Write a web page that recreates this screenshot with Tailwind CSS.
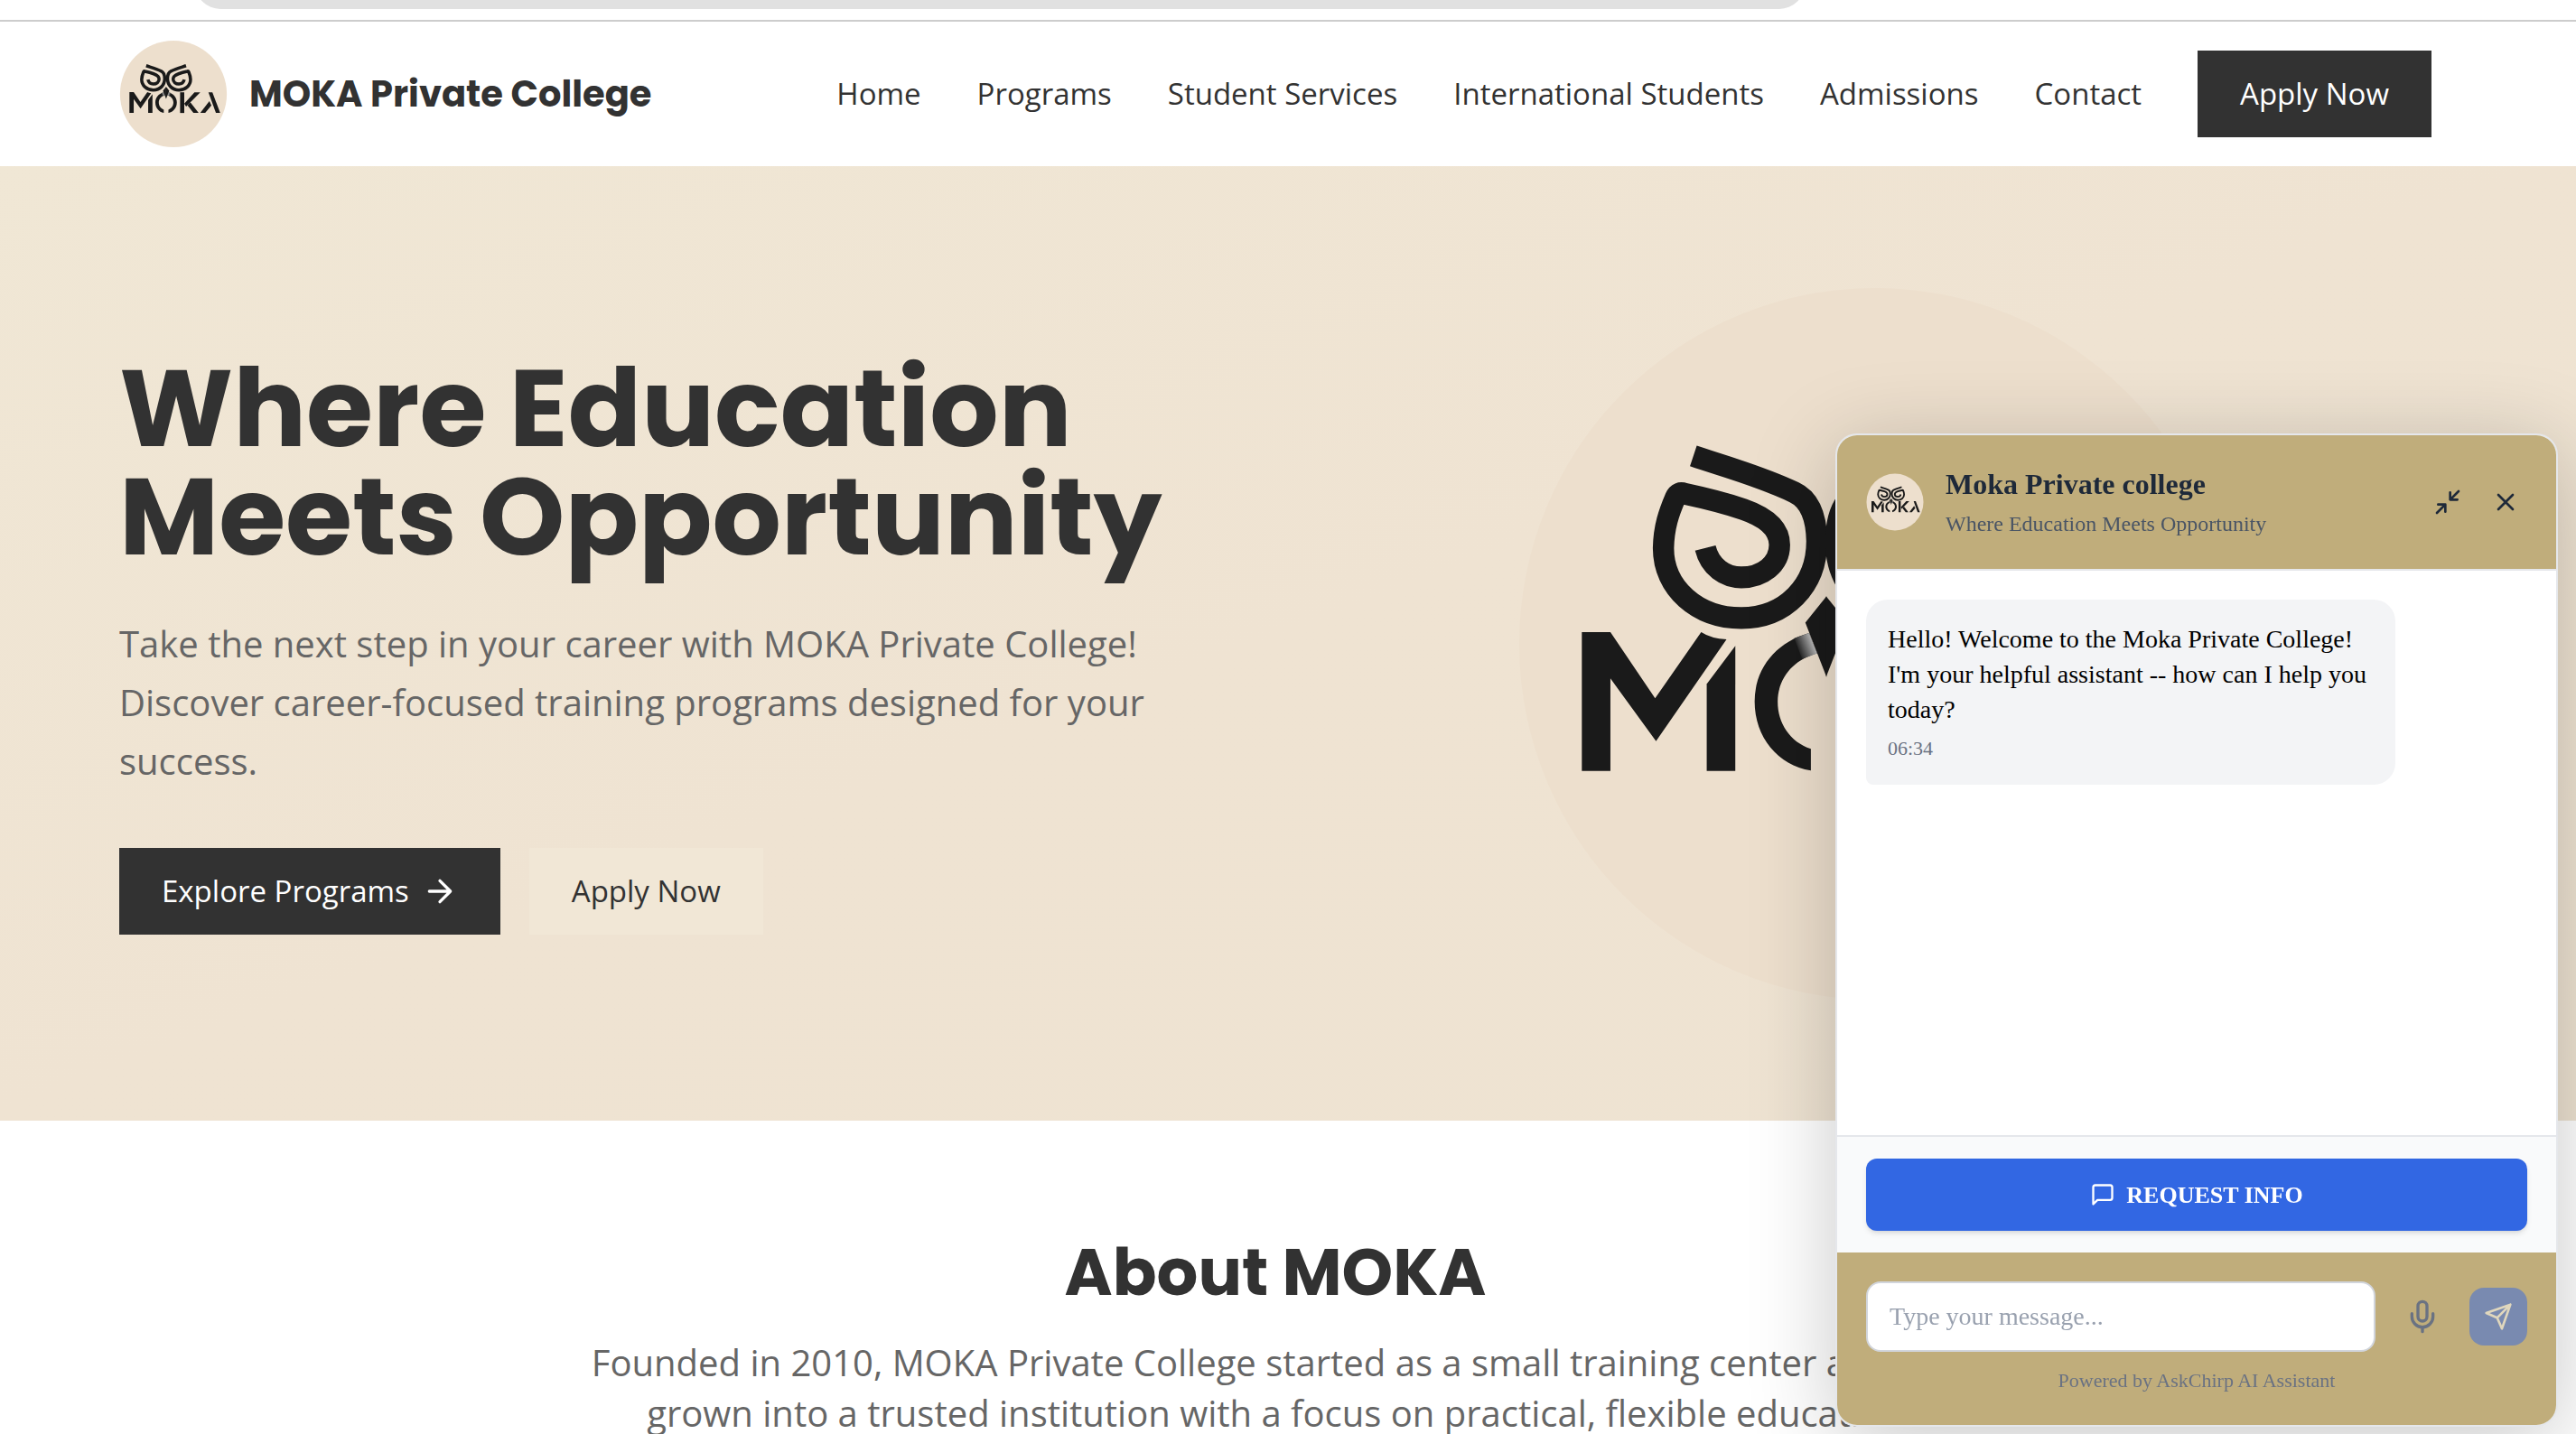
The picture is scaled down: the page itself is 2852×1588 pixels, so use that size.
<!DOCTYPE html>
<html lang="en">
<head>
<meta charset="utf-8">
<title>MOKA Private College</title>
<script src="https://cdn.jsdelivr.net/npm/@tailwindcss/browser@4"></script>
</head>
<body class="h-screen overflow-hidden bg-white font-['Open_Sans',sans-serif] text-[#323232]">

<svg class="absolute size-0" aria-hidden="true">
  <defs>
    <linearGradient id="shine" gradientUnits="userSpaceOnUse" x1="645" y1="798" x2="685" y2="782">
      <stop offset="0" stop-color="#1a1a1a"/><stop offset="1" stop-color="#d0d0d0"/>
    </linearGradient>
    <g id="half" fill="#1a1a1a">
      <path fill="none" stroke="#1a1a1a" stroke-width="46" d="M421 390C480 410 560 430 640 467C675 483 688 520 689 570C689 665 620 733 525 733C430 733 356 670 356 585C357 540 368 510 382 478Q388 465 402 470C450 480 490 490 530 503C580 520 608 545 608 578C608 620 570 647 525 647C490 647 457 625 447 585"/>
      <path d="M672 765C600 785 554 840 554 910C554 985 605 1045 676 1056V1010C630 995 604 955 604 910C604 860 640 820 690 808Z"/>
      <path fill="url(#shine)" d="M640 776L672 765L690 808L657 820Z"/>
      <path d="M710 687L664 743L710 858Z"/>
    </g>
    <symbol id="moka" viewBox="0 0 800 800">
      <circle cx="400" cy="400" r="394" fill="#eddfcd"/>
      <g transform="translate(-16 -12) scale(.5102 .523)">
        <use href="#half"/>
        <use href="#half" transform="translate(1419 0) scale(-1 1)"/>
        <g fill="#1a1a1a">
          <path d="M179 763H241L338 903L438 763Q460 777 493 778L340 994L241 861V1057H179Z"/>
          <path d="M450 873L512 792V1057H450Z"/>
          <path d="M912 765H972V1057H912Z"/>
          <path d="M1120 765H1204L1000 965L972 925Z"/>
          <path d="M1060 905L1180 1057H1105L1020 950Z"/>
          <path d="M1322 765H1379L1492 1057H1430Z"/>
          <path d="M1335 890L1365 950L1275 1057H1204Z"/>
        </g>
      </g>
    </symbol>
  </defs>
</svg>

<!-- Browser toolbar edge -->
<div class="h-6 border-b-2 border-[#cdcdcd] pl-[216px]">
  <div class="flex h-2.5 items-end overflow-hidden">
    <div class="h-14 w-[1782px] max-w-full rounded-full bg-[#e1e1e1]"></div>
  </div>
</div>

<header class="h-40 bg-white pr-7">
  <div class="mx-auto flex h-full max-w-[2560px] items-center justify-between">
    <a href="#" class="flex items-center gap-6">
      <svg class="size-[120px]" role="img" aria-label="MOKA logo"><use href="#moka"/></svg>
      <span class="font-['Poppins','Inter',sans-serif] text-[40px] font-bold">MOKA Private College</span>
    </a>
    <nav class="flex items-center gap-[62px] text-[33px] font-medium">
      <a href="#">Home</a>
      <a href="#">Programs</a>
      <a href="#">Student Services</a>
      <a href="#">International Students</a>
      <a href="#">Admissions</a>
      <a href="#">Contact</a>
      <button class="h-24 bg-[#323232] px-[47px] text-white">Apply Now</button>
    </nav>
  </div>
</header>

<main>
  <section class="bg-linear-to-br from-[#f0e7d5] via-[#efe3d2] to-[#eee3d2] pt-[129px] pr-7 pb-32">
    <div class="mx-auto grid max-w-[2560px] grid-cols-2 items-center gap-24">
      <div>
        <h1 class="mb-12 font-['Poppins','Inter',sans-serif] text-[120px] leading-[120px] font-bold">Where Education<br>Meets Opportunity</h1>
        <p class="mb-16 text-[40px] leading-[65px] text-[#666]">Take the next step in your career with MOKA Private College! Discover career-focused training programs designed for your success.</p>
        <div class="flex gap-8 text-[33px] font-medium">
          <button class="flex h-24 items-center gap-3.5 bg-[#323232] px-[47px] text-white">Explore Programs
            <svg class="size-10" viewBox="0 0 24 24" fill="none" stroke="currentColor" stroke-width="2" stroke-linecap="round" stroke-linejoin="round"><path d="M5 12h14M12 5l7 7-7 7"/></svg>
          </button>
          <button class="h-24 bg-[#f1e7d6] px-[47px]">Apply Now</button>
        </div>
      </div>
      <svg class="mx-auto size-[800px]" role="img" aria-label="MOKA owl logo"><use href="#moka"/></svg>
    </div>
  </section>

  <section class="pt-32 pr-7 text-center">
    <h2 class="mb-8 font-['Poppins','Inter',sans-serif] text-[72px] leading-20 font-bold">About MOKA</h2>
    <p class="mx-auto max-w-[1536px] text-[40px] leading-14 text-[#666]">Founded in 2010, MOKA Private College started as a small training center and has grown into a trusted institution with a focus on practical, flexible education</p>
  </section>
</main>

<!-- Chat widget -->
<aside class="fixed right-5 bottom-2 flex h-[1100px] w-[800px] flex-col overflow-hidden rounded-3xl border-2 border-gray-200 bg-white font-['Liberation_Serif',serif] shadow-[0_16px_96px_rgba(0,0,0,0.22)]">
  <div class="flex h-[150px] shrink-0 items-center gap-6 border-b-2 border-gray-200 bg-[#c0ad7b] px-8">
    <svg class="size-16" role="img" aria-label="MOKA logo"><use href="#moka"/></svg>
    <div class="flex-1 pt-1">
      <h3 class="text-[32px] leading-10 font-bold text-gray-800">Moka Private college</h3>
      <p class="pt-1 text-[24px] leading-10 text-gray-600">Where Education Meets Opportunity</p>
    </div>
    <button class="grid size-16 place-items-center text-gray-800" aria-label="Minimize">
      <svg class="size-8" viewBox="0 0 24 24" fill="none" stroke="currentColor" stroke-width="2" stroke-linecap="round" stroke-linejoin="round"><path d="M4 14h6v6M20 10h-6V4M14 10l7-7M3 21l7-7"/></svg>
    </button>
    <button class="-mr-2 -ml-6 grid size-16 place-items-center text-gray-800" aria-label="Close">
      <svg class="size-8" viewBox="0 0 24 24" fill="none" stroke="currentColor" stroke-width="2" stroke-linecap="round" stroke-linejoin="round"><path d="M18 6 6 18M6 6l12 12"/></svg>
    </button>
  </div>
  <div class="flex-1 px-8 pt-8">
    <div class="w-[586px] rounded-3xl rounded-bl-lg bg-gray-100 p-6 text-black">
      <p class="text-[28px] leading-[39px]">Hello! Welcome to the Moka Private College! I'm your helpful assistant -- how can I help you today?</p>
      <time class="mt-2 block text-[22px] leading-8 text-gray-500">06:34</time>
    </div>
  </div>
  <div class="border-t-2 border-gray-200 bg-gray-50 px-8 py-6">
    <button class="flex h-20 w-full items-center justify-center gap-3 rounded-xl bg-[#3267e3] text-[26px] font-bold text-white shadow-md">
      <svg class="size-7" viewBox="0 0 24 24" fill="none" stroke="currentColor" stroke-width="2" stroke-linecap="round" stroke-linejoin="round"><path d="M21 15a2 2 0 0 1-2 2H7l-4 4V5a2 2 0 0 1 2-2h14a2 2 0 0 1 2 2z"/></svg>
      REQUEST INFO
    </button>
  </div>
  <div class="bg-[#c0ad7b] px-8 pt-8 pb-[33px]">
    <form class="flex items-center gap-5">
      <input type="text" aria-label="Message" placeholder="Type your message..." class="h-[78px] min-w-0 flex-1 rounded-2xl border-2 border-gray-300 bg-white px-6 text-[28px] placeholder:text-gray-400">
      <button type="button" class="grid size-16 place-items-center text-gray-500" aria-label="Voice input">
        <svg class="size-10" viewBox="0 0 24 24" fill="none" stroke="currentColor" stroke-width="2" stroke-linecap="round" stroke-linejoin="round"><path d="M12 2a3 3 0 0 0-3 3v7a3 3 0 0 0 6 0V5a3 3 0 0 0-3-3ZM19 10v2a7 7 0 0 1-14 0v-2M12 19v3"/></svg>
      </button>
      <button type="button" class="grid size-16 place-items-center rounded-2xl bg-[#798ab0] text-[#e0d7bd]" aria-label="Send">
        <svg class="size-8" viewBox="0 0 24 24" fill="none" stroke="currentColor" stroke-width="2" stroke-linecap="round" stroke-linejoin="round"><path d="M22 2 11 13M22 2l-7 20-4-9-9-4 20-7z"/></svg>
      </button>
    </form>
    <p class="mt-4 text-center text-[22px] leading-8 text-gray-500">Powered by AskChirp AI Assistant</p>
  </div>
</aside>
</body>
</html>
